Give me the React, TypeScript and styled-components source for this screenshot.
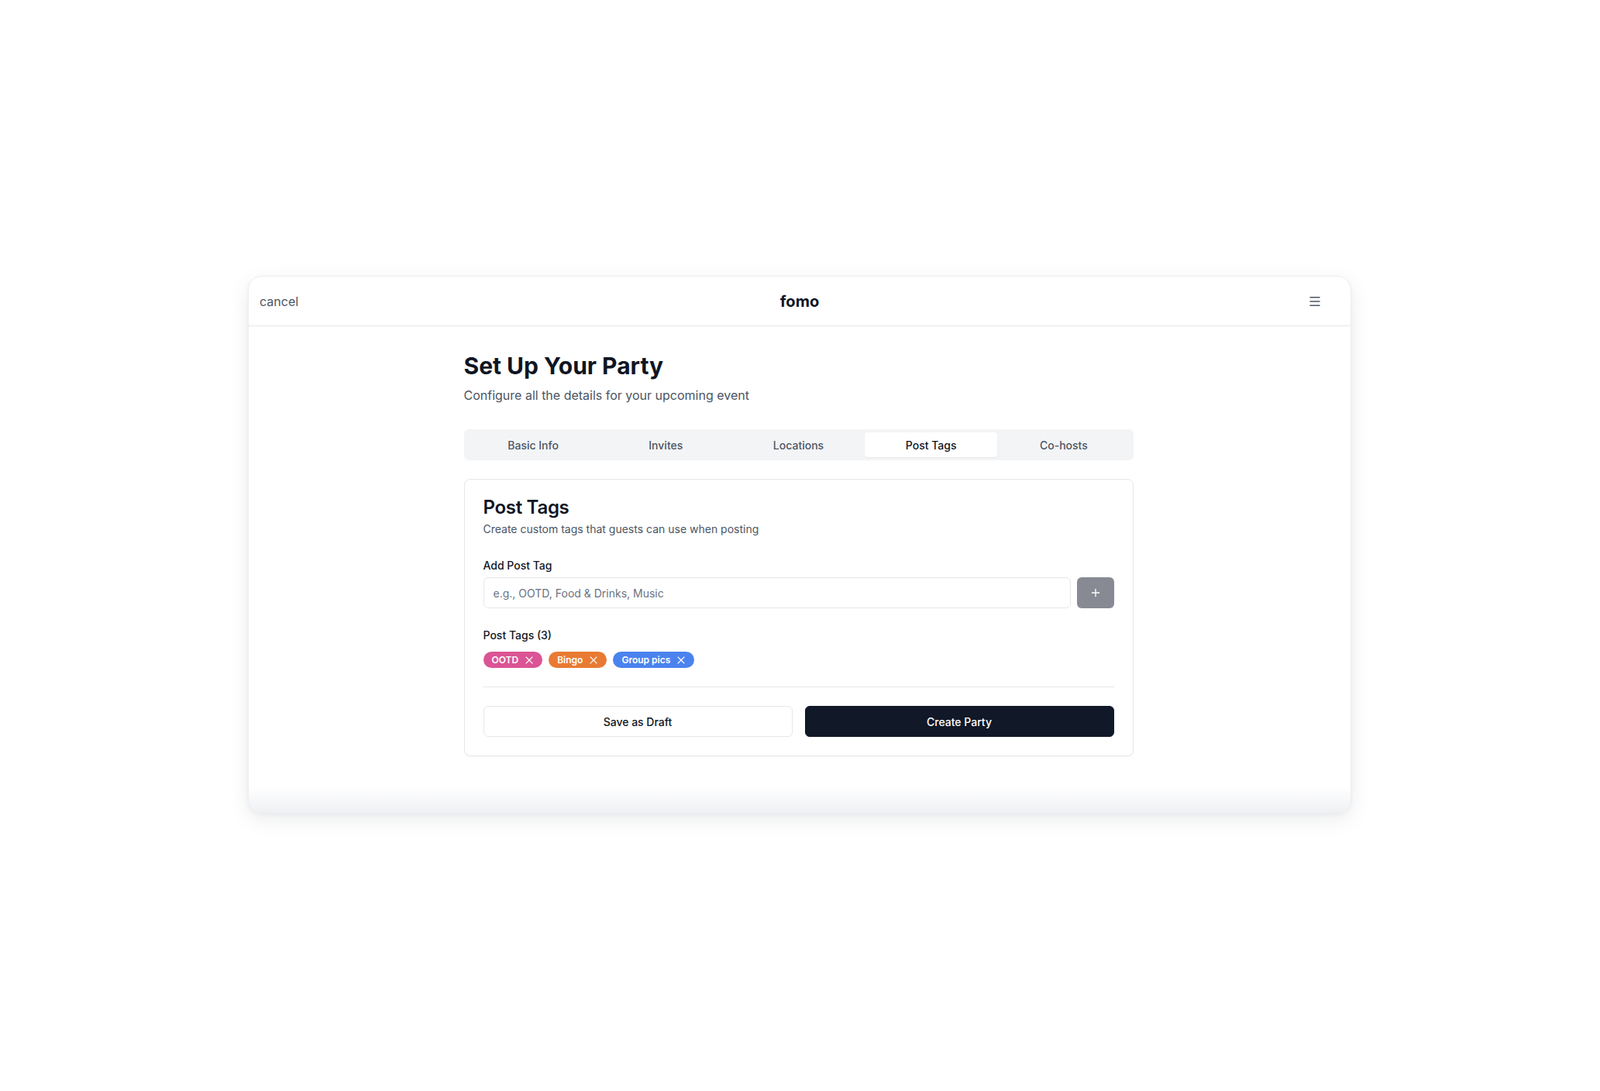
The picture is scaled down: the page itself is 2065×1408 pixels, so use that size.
import styled, { createGlobalStyle } from "styled-components";
import { Menu, Plus, X } from "lucide-react";

const GlobalStyle = createGlobalStyle`
  html, body {
    margin: 0;
    padding: 0;
    background: #ffffff;
    font-family: Inter, "Noto Sans", "Liberation Sans", sans-serif;
    color: #111827;
  }
  * {
    box-sizing: border-box;
  }
`;

const tabs = ["Basic Info", "Invites", "Locations", "Post Tags", "Co-hosts"];

const tags = [
  { label: "OOTD", color: "#db5495" },
  { label: "Bingo", color: "#e97a33" },
  { label: "Group pics", color: "#4b83ee" },
];

const App = () => {
  return (
    <Page>
      <GlobalStyle />
      <Window>
        <Header>
          <CancelLink>cancel</CancelLink>
          <Brand>fomo</Brand>
          <MenuButton aria-label="menu">
            <Menu size={18} strokeWidth={2} />
          </MenuButton>
        </Header>
        <Content>
          <Title>Set Up Your Party</Title>
          <Subtitle>Configure all the details for your upcoming event</Subtitle>
          <TabList>
            {tabs.map((tab) => (
              <Tab key={tab} active={tab === "Post Tags"}>
                {tab}
              </Tab>
            ))}
          </TabList>
          <Card>
            <CardHeader>
              <CardTitle>Post Tags</CardTitle>
              <CardDescription>Create custom tags that guests can use when posting</CardDescription>
            </CardHeader>
            <CardBody>
              <Field>
                <Label>Add Post Tag</Label>
                <InputRow>
                  <TextInput placeholder="e.g., OOTD, Food & Drinks, Music" />
                  <AddButton disabled aria-label="add tag">
                    <Plus size={16} strokeWidth={2} />
                  </AddButton>
                </InputRow>
              </Field>
              <Field spaced>
                <Label>Post Tags (3)</Label>
                <TagList>
                  {tags.map((tag) => (
                    <Tag key={tag.label} color={tag.color}>
                      {tag.label}
                      <X size={16} strokeWidth={1.6} />
                    </Tag>
                  ))}
                </TagList>
              </Field>
              <Actions>
                <SecondaryButton>Save as Draft</SecondaryButton>
                <PrimaryButton>Create Party</PrimaryButton>
              </Actions>
            </CardBody>
          </Card>
        </Content>
        <BottomFade />
      </Window>
    </Page>
  );
};

const Page = styled.div`
  width: 100vw;
  height: 100vh;
  padding: 0 1px 2px 0;
  display: flex;
  align-items: center;
  justify-content: center;
`;

const Window = styled.div`
  position: relative;
  width: 1424px;
  height: 694px;
  background: #ffffff;
  border: 1px solid #eceef1;
  border-radius: 18px;
  box-shadow: 0 8px 28px rgba(15, 23, 42, 0.08), 0 2px 6px rgba(15, 23, 42, 0.04);
  overflow: hidden;
`;

const Header = styled.header`
  height: 64px;
  display: grid;
  grid-template-columns: 1fr auto 1fr;
  align-items: center;
  padding: 0 14px;
  border-bottom: 1px solid #e5e7eb;
`;

const CancelLink = styled.span`
  font-size: 16px;
  color: #4b5563;
  justify-self: start;
`;

const Brand = styled.span`
  font-size: 20px;
  font-weight: 700;
  color: #0f1523;
`;

const MenuButton = styled.button`
  justify-self: end;
  width: 18px;
  height: 18px;
  margin-right: 23px;
  padding: 0;
  border: none;
  background: transparent;
  color: #4b5563;
  display: flex;
  align-items: center;
  justify-content: center;
`;

const Content = styled.main`
  width: 867px;
  margin: 0 auto;
  padding: 33px 3px 0 0;
`;

const Title = styled.h1`
  margin: 0;
  font-size: 30px;
  line-height: 36px;
  font-weight: 700;
  color: #0f1523;
`;

const Subtitle = styled.p`
  margin: 8px 0 0;
  font-size: 16px;
  line-height: 24px;
  color: #4b5563;
`;

const TabList = styled.div`
  margin-top: 32px;
  height: 40px;
  padding: 4px;
  display: grid;
  grid-template-columns: repeat(5, 1fr);
  background: #f3f4f6;
  border-radius: 6px;
`;

const Tab = styled.div<{ active?: boolean }>`
  display: flex;
  align-items: center;
  justify-content: center;
  font-size: 14px;
  font-weight: 500;
  border-radius: 4px;
  color: ${(p) => (p.active ? "#0f1523" : "#4b5563")};
  background: ${(p) => (p.active ? "#ffffff" : "transparent")};
  box-shadow: ${(p) => (p.active ? "0 1px 2px rgba(0, 0, 0, 0.06)" : "none")};
`;

const Card = styled.section`
  margin-top: 24px;
  border: 1px solid #e5e7eb;
  border-radius: 8px;
  background: #ffffff;
  box-shadow: 0 1px 2px rgba(0, 0, 0, 0.04);
`;

const CardHeader = styled.div`
  padding: 24px;
  display: flex;
  flex-direction: column;
  gap: 6px;
`;

const CardTitle = styled.h2`
  margin: 0;
  font-size: 24px;
  line-height: 24px;
  font-weight: 600;
  letter-spacing: -0.3px;
  color: #0f1523;
`;

const CardDescription = styled.p`
  margin: 0;
  font-size: 14px;
  line-height: 20px;
  color: #4b5563;
`;

const CardBody = styled.div`
  padding: 6px 24px 24px;
  display: flex;
  flex-direction: column;
  gap: 24px;
`;

const Field = styled.div<{ spaced?: boolean }>`
  display: flex;
  flex-direction: column;
  gap: 8px;
  margin-top: ${(p) => (p.spaced ? "4px" : "0")};
`;

const Label = styled.label`
  font-size: 14px;
  line-height: 14px;
  font-weight: 500;
  color: #0f1523;
`;

const InputRow = styled.div`
  display: flex;
  gap: 8px;
`;

const TextInput = styled.input`
  flex: 1;
  height: 40px;
  padding: 0 12px;
  border: 1px solid #e5e7eb;
  border-radius: 6px;
  font-family: inherit;
  font-size: 14px;
  color: #111827;
  outline: none;
  &::placeholder {
    color: #6b7280;
  }
`;

const AddButton = styled.button`
  width: 48px;
  height: 40px;
  border: none;
  border-radius: 6px;
  background: #111827;
  opacity: 0.5;
  color: #ffffff;
  display: flex;
  align-items: center;
  justify-content: center;
`;

const TagList = styled.div`
  margin-top: 6px;
  display: flex;
  flex-wrap: wrap;
  gap: 8px;
`;

const Tag = styled.span<{ color: string }>`
  height: 21px;
  display: inline-flex;
  align-items: center;
  gap: 6px;
  padding: 0 9px 0 11px;
  border-radius: 999px;
  background: ${(p) => p.color};
  color: #ffffff;
  font-size: 12px;
  font-weight: 600;
`;

const Actions = styled.div`
  display: flex;
  gap: 16px;
  padding-top: 24px;
  border-top: 1px solid #e5e7eb;
`;

const BaseButton = styled.button`
  flex: 1;
  height: 40px;
  border-radius: 6px;
  font-family: inherit;
  font-size: 14px;
  font-weight: 500;
`;

const SecondaryButton = styled(BaseButton)`
  background: #ffffff;
  border: 1px solid #e5e7eb;
  color: #0f1523;
`;

const PrimaryButton = styled(BaseButton)`
  background: #111827;
  border: 1px solid #111827;
  color: #ffffff;
`;

const BottomFade = styled.div`
  position: absolute;
  left: 0;
  right: 0;
  bottom: 0;
  height: 34px;
  background: linear-gradient(to bottom, rgba(241, 243, 246, 0), #eef0f3);
  pointer-events: none;
`;

export default App;
